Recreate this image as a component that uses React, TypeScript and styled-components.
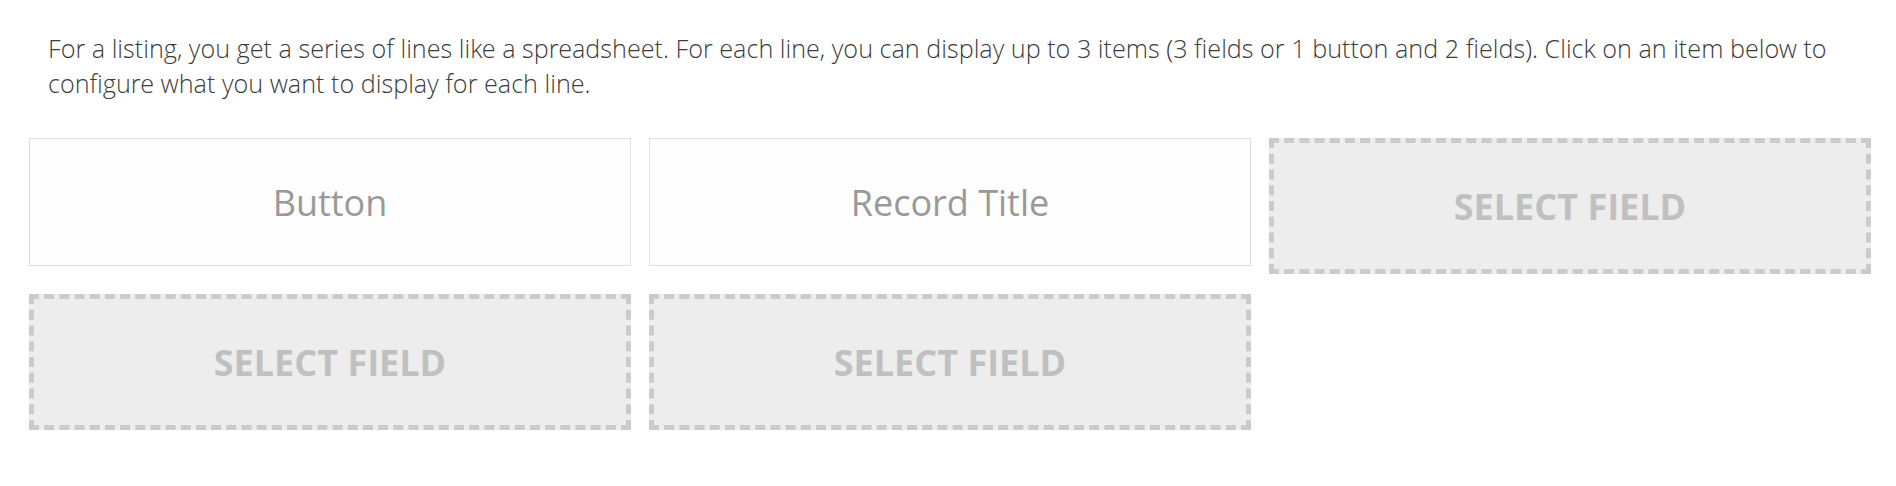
import { FC } from "react";
import styled, { createGlobalStyle } from "styled-components";

type Slot = { label: string; empty: boolean };

const slots: Slot[] = [
    { label: "Button", empty: false },
    { label: "Record Title", empty: false },
    { label: "SELECT FIELD", empty: true },
    { label: "SELECT FIELD", empty: true },
    { label: "SELECT FIELD", empty: true },
];

const App: FC = () => {
    return (
        <SPage>
            <GlobalStyle />
            <SIntro>
                For a listing, you get a series of lines like a spreadsheet. For each line, you can display up to 3 items
                (3 fields or 1 button and 2 fields). Click on an item below to configure what you want to display for each line.
            </SIntro>
            <SGrid>
                {slots.map((s, i) => (
                    <SSlot key={i} $empty={s.empty}>
                        {s.label}
                    </SSlot>
                ))}
            </SGrid>
        </SPage>
    );
};

export default App;

const GlobalStyle = createGlobalStyle`
    body {
        margin: 0;
        background: #fff;
        font-family: "Open Sans", "Noto Sans", sans-serif;
    }
`;

const SPage = styled.div`
    padding-top: 31px;
`;

const SIntro = styled.p`
    margin: 0;
    padding: 0 44px 0 48px;
    font-family: "Open Sans Light", "Open Sans", "Noto Sans", sans-serif;
    font-size: 25.2px;
    font-weight: 300;
    line-height: 35px;
    color: #3c3c3c;
`;

const SGrid = styled.div`
    display: grid;
    grid-template-columns: repeat(3, 602px);
    column-gap: 18px;
    row-gap: 20px;
    align-items: start;
    margin-top: 37px;
    padding-left: 29px;
`;

const SSlot = styled.div<{ $empty: boolean }>`
    display: flex;
    align-items: center;
    justify-content: center;
    box-sizing: border-box;
    height: ${(p) => (p.$empty ? "136px" : "128px")};
    border: ${(p) => (p.$empty ? "5px dashed #cbcbcb" : "1px solid #e0e0e0")};
    background: ${(p) => (p.$empty ? "#ededed" : "#fdfdfd")};
    color: ${(p) => (p.$empty ? "#c0c0c0" : "#999")};
    font-size: 36px;
    font-weight: ${(p) => (p.$empty ? 700 : 400)};
    cursor: pointer;
`;
